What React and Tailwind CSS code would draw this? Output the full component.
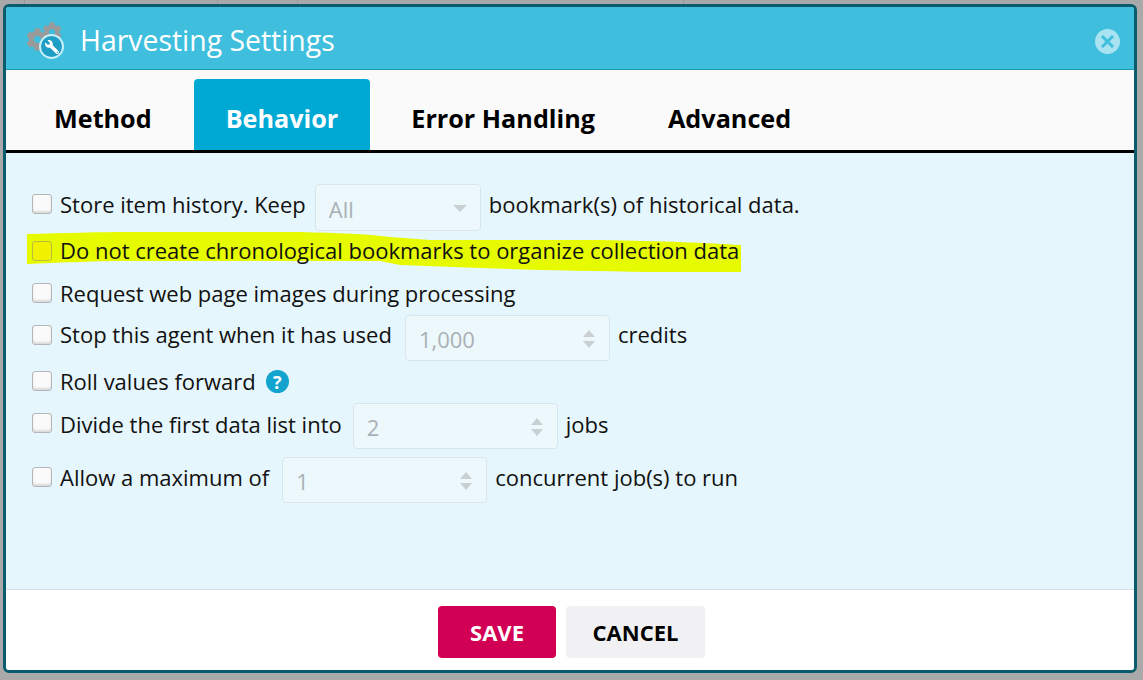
import React from 'react';
import { FaCog, FaWrench } from 'react-icons/fa';

const tabs = ['Method', 'Behavior', 'Error Handling', 'Advanced'];

const Check = () => (
  <input
    type="checkbox"
    className="appearance-none w-[20px] h-[20px] mb-[7px] shrink-0 rounded-[3px] border border-[#b4b6b8] shadow-[inset_0_-2px_2px_#dcdcdc] bg-[#fafafa]"
  />
);

const Spinner = ({ value, margin = 'mx-[13px]' }) => (
  <div className={`w-[205px] h-[46px] ${margin} pl-[13px] pr-[14px] pt-[2px] flex items-center justify-between rounded-[4px] border border-[#d8e6ec] bg-[#edf8fc] text-[#a9b1b5]`}>
    <span>{value}</span>
    <span className="flex flex-col gap-[4px]">
      <span className="w-0 h-0 border-x-[6px] border-x-transparent border-b-[7px] border-b-[#c9d0d3]" />
      <span className="w-0 h-0 border-x-[6px] border-x-transparent border-t-[7px] border-t-[#c9d0d3]" />
    </span>
  </div>
);

const Row = ({ className, children }) => (
  <div className={`relative flex items-center ${className}`}>{children}</div>
);

const Text = ({ children, className = '', lift = '-mt-[8px]' }) => <span className={`${lift} ${className}`}>{children}</span>;

export default function App() {
  return (
    <div className="w-[1143px] h-[680px] overflow-hidden bg-[#a9a9a9] font-['Open_Sans',sans-serif]">
      <div className="flex h-[4px]">
        <div className="w-[25px] border-r border-[#999]" />
        <div className="w-[193px] border-r border-[#999]" />
        <div className="w-[80px] border-r border-[#999]" />
        <div className="w-[386px] border-r border-[#999]" />
      </div>
      <div className="ml-[3px] w-[1134px] h-[669px] flex flex-col rounded-[6px] border-[3px] border-[#0a5b6b] overflow-hidden bg-white">
        <div className="h-[63px] shrink-0 flex items-center bg-[#3fbfdd] border-b border-[#1c97ae] pl-[19px] pr-[14px]">
          <div className="relative w-[42px] h-[40px] shrink-0">
            <FaCog className="absolute left-[1px] top-[10px] text-[#9a9a9a] w-[23px] h-[23px]" />
            <FaCog className="absolute left-[17px] top-[4px] text-[#9a9a9a] w-[20px] h-[20px]" />
            <div className="absolute left-[14px] top-[16px] w-[25px] h-[25px] rounded-full border-[2px] border-[#c8f0fa] bg-[#1f9fc6] flex items-center justify-center">
              <FaWrench className="text-white w-[14px] h-[14px] -scale-x-100" />
            </div>
          </div>
          <div className="ml-[13px] pt-1 text-[28.4px] leading-none text-white">Harvesting Settings</div>
          <div className="ml-auto mt-[6px] w-[25px] h-[25px] rounded-full bg-[#a9e2f1] flex items-center justify-center">
            <svg width="17" height="17" viewBox="0 0 17 17">
              <path d="M3 3 L14 14 M14 3 L3 14" stroke="#3fbfdd" strokeWidth="3" />
            </svg>
          </div>
        </div>
        <div className="h-[83px] shrink-0 flex items-end gap-[9px] pl-[16px] bg-[#fafafa] border-b-[3px] border-black">
          {tabs.map((t) => (
            <div
              key={t}
              className={`h-[71px] px-[32px] flex items-center pt-[8px] text-[25.2px] font-bold rounded-t-[4px] ${
                t === 'Behavior' ? 'bg-[#00a9d4] text-white' : 'text-black'
              } ${t === 'Method' ? 'mr-px' : ''}`}
            >
              {t}
            </div>
          ))}
        </div>
        <div className="relative h-[437px] shrink-0 bg-[#e5f6fc] border-b border-[#d3dfe4] pt-[31px] pl-[26px] text-[22px] leading-[30px] text-[#111]">
          <svg className="absolute left-[21px] top-[77px]" width="715" height="44" viewBox="0 0 715 44">
            <path d="M0 4 C40 3 70 2 103 2 L273 2 C310 3 340 4 363 7 L403 10 L573 10 C640 11 680 13 714 15 L714 42 L623 42 C560 41 500 40 453 38 L373 35 L353 31 L103 31 C60 31 30 33 0 34 Z" fill="#e6fb00" />
          </svg>
          <Row>
            <Check />
            <Text className="ml-[8px]">Store item history. Keep</Text>
            <div className="w-[166px] h-[47px] ml-[9px] mr-[8px] pl-[13px] pr-[13px] pt-[2px] flex items-center justify-between rounded-[4px] border border-[#d8e6ec] bg-[#edf8fc] text-[#a9b1b5]">
              <span>All</span>
              <span className="w-0 h-0 border-x-[7px] border-x-transparent border-t-[7px] border-t-[#c9d0d3]" />
            </div>
            <Text>bookmark(s) of historical data.</Text>
          </Row>
          <Row className="h-[30px] mt-[8px]">
            <input type="checkbox" className="appearance-none w-[20px] h-[20px] mb-[7px] shrink-0 rounded-[3px] border border-[#b9bc40] bg-[#f2f200]" />
            <Text className="ml-[8px]">Do not create chronological bookmarks to organize collection data</Text>
          </Row>
          <Row className="h-[30px] mt-[12px]">
            <Check />
            <Text className="ml-[8px]" lift="-mt-[6px]">Request web page images during processing</Text>
          </Row>
          <Row className="mt-[4px]">
            <Check />
            <Text className="ml-[8px]">Stop this agent when it has used</Text>
            <Spinner value="1,000" />
            <Text className="-ml-[5px]">credits</Text>
          </Row>
          <Row className="h-[30px] mt-[8px]">
            <Check />
            <Text className="ml-[8px]" lift="-mt-[6px]">Roll values forward</Text>
            <span className="ml-[10px] -mt-[5px] w-[23px] h-[23px] rounded-full bg-[#12a3cf] text-white text-[18px] leading-none font-bold flex items-center justify-center">?</span>
          </Row>
          <Row className="mt-[4px]">
            <Check />
            <Text className="ml-[8px]" lift="-mt-[4px]">Divide the first data list into</Text>
            <Spinner value="2" margin="ml-[11px] mr-[13px]" />
            <Text className="-ml-[5px]" lift="-mt-[4px]">jobs</Text>
          </Row>
          <Row className="mt-[8px]">
            <Check />
            <Text className="ml-[8px]" lift="-mt-[6px]">Allow a maximum of</Text>
            <Spinner value="1" />
            <Text className="-ml-[5px]" lift="-mt-[6px]">concurrent job(s) to run</Text>
          </Row>
        </div>
        <div className="flex-1 flex items-start justify-center gap-[10px] pt-[16px] pl-[3px] text-[22px] font-bold bg-white">
          <button className="w-[118px] h-[52px] rounded-[4px] bg-[#d20054] text-white">SAVE</button>
          <button className="w-[139px] h-[52px] rounded-[4px] bg-[#f1f1f3] text-black">CANCEL</button>
        </div>
      </div>
    </div>
  );
}
